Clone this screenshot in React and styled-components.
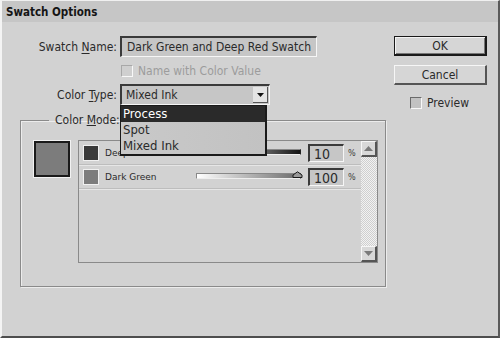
import React from "react";
import styled, { createGlobalStyle } from "styled-components";

const GlobalStyle = createGlobalStyle`
  html, body {
    margin: 0;
    padding: 0;
    background: #d2d2d2;
  }
  body {
    font-family: "DejaVu Sans Condensed", "Liberation Sans", sans-serif;
    font-size: 12px;
    color: #1e1e1e;
  }
`;

const rows = [
  { name: "Deep Red", color: "#3a3a3a", value: "10", track: "linear-gradient(90deg, #f4f4f4, #141414)", thumb: null },
  { name: "Dark Green", color: "#7c7c7c", value: "100", track: "linear-gradient(90deg, #ffffff, #6a6a6a)", thumb: 100 },
];

const App = () => {
  return (
    <>
      <GlobalStyle />
      <Window>
        <TitleBar>Swatch Options</TitleBar>
        <Body>
          <Main>
            <FormRow>
              <Label>
                Swatch <u>N</u>ame:
              </Label>
              <TextField>Dark Green and Deep Red Swatch</TextField>
            </FormRow>
            <FormRow $short>
              <span />
              <CheckLine $disabled>
                <CheckBox $disabled />
                Name with Color Value
              </CheckLine>
            </FormRow>
            <FormRow>
              <Label>
                Color <u>T</u>ype:
              </Label>
              <Select>
                <span>Mixed Ink</span>
                <ArrowButton>
                  <svg width="7" height="4" viewBox="0 0 7 4">
                    <path d="M0 0h7L3.5 4z" fill="#111" />
                  </svg>
                </ArrowButton>
                <Menu>
                  <MenuItem $active>Process</MenuItem>
                  <MenuItem>Spot</MenuItem>
                  <MenuItem>Mixed Ink</MenuItem>
                </Menu>
              </Select>
            </FormRow>
            <Group>
              <Legend>
                Color <u>M</u>ode:
              </Legend>
              <GroupInner>
                <BigSwatch />
                <InkList>
                  <InkRows>
                    {rows.map((r) => (
                      <InkRow key={r.name}>
                        <SmallSwatch $color={r.color} />
                        <InkName>{r.name}</InkName>
                        <Track $bg={r.track}>
                          {r.thumb !== null && (
                            <Thumb style={{ left: `${r.thumb}%` }}>
                              <svg width="11" height="7" viewBox="0 0 11 7">
                                <path d="M1 6.5V4L5.5 0.8L10 4v2.5z" fill="#9a9a9a" stroke="#1a1a1a" strokeWidth="1" />
                              </svg>
                            </Thumb>
                          )}
                        </Track>
                        <Percent>{r.value}</Percent>
                        <Unit>%</Unit>
                      </InkRow>
                    ))}
                  </InkRows>
                  <ScrollBar>
                    <ScrollButton>
                      <svg width="9" height="5" viewBox="0 0 9 5">
                        <path d="M0 5L4.5 0L9 5z" fill="#7a7a7a" />
                      </svg>
                    </ScrollButton>
                    <ScrollTrack />
                    <ScrollButton>
                      <svg width="9" height="5" viewBox="0 0 9 5">
                        <path d="M0 0h9L4.5 5z" fill="#7a7a7a" />
                      </svg>
                    </ScrollButton>
                  </ScrollBar>
                </InkList>
              </GroupInner>
            </Group>
          </Main>
          <Side>
            <Button $default>OK</Button>
            <Button>Cancel</Button>
            <CheckLine $side>
              <CheckBox />
              Preview
            </CheckLine>
          </Side>
        </Body>
      </Window>
    </>
  );
};

export default App;

const Window = styled.div`
  width: 500px;
  height: 338px;
  box-sizing: border-box;
  border-top: 1px solid #f0f0f0;
  border-left: 2px solid #f4f4f4;
  border-right: 2px solid #5a5a5a;
  border-bottom: 2px solid #4e4e4e;
  background: #d2d2d2;
  display: flex;
  flex-direction: column;
  overflow: hidden;
`;

const TitleBar = styled.div`
  height: 21px;
  background: #c6c6c6;
  font-family: "DejaVu Sans Condensed", "Liberation Sans", sans-serif;
  font-weight: bold;
  font-size: 11.5px;
  color: #151515;
  display: flex;
  align-items: center;
  padding-left: 4px;
`;

const Body = styled.div`
  flex: 1;
  display: flex;
  padding: 14px 0 0 16px;
`;

const Main = styled.div`
  width: 366px;
  display: flex;
  flex-direction: column;
`;

const FormRow = styled.div`
  display: grid;
  grid-template-columns: 99px auto;
  column-gap: 3px;
  align-items: center;
  margin-bottom: ${(p) => (p.$short ? "6px" : "7px")};
  justify-items: start;
`;

const Label = styled.label`
  justify-self: end;
  color: #2a2a2a;
  white-space: nowrap;
  u {
    text-underline-offset: 2px;
  }
`;

const sunken = `
  box-sizing: border-box;
  border-top: 2px solid #3a3a3a;
  border-left: 2px solid #3a3a3a;
  border-right: 1px solid #f6f6f6;
  border-bottom: 1px solid #f6f6f6;
  background: #c6c6c6;
`;

const TextField = styled.div`
  ${sunken}
  width: 197px;
  height: 21px;
  padding: 2px 0 0 5px;
  color: #2a2a2a;
  white-space: nowrap;
`;

const CheckLine = styled.label`
  display: flex;
  align-items: center;
  gap: 5px;
  color: ${(p) => (p.$disabled ? "#9c9c9c" : "#2a2a2a")};
  margin-left: ${(p) => (p.$side ? "16px" : "1px")};
  margin-top: ${(p) => (p.$side ? "2px" : "0")};
`;

const CheckBox = styled.span`
  width: 12px;
  height: 12px;
  box-sizing: border-box;
  border-top: 1px solid ${(p) => (p.$disabled ? "#a8a8a8" : "#6a6a6a")};
  border-left: 1px solid ${(p) => (p.$disabled ? "#a8a8a8" : "#6a6a6a")};
  border-right: 1px solid #f8f8f8;
  border-bottom: 1px solid #f8f8f8;
  background: ${(p) => (p.$disabled ? "#cfcfcf" : "#c2c2c2")};
`;

const Select = styled.div`
  ${sunken}
  position: relative;
  width: 150px;
  height: 21px;
  display: flex;
  align-items: center;
  justify-content: space-between;
  padding: 0 1px 0 4px;
  color: #2a2a2a;
`;

const ArrowButton = styled.span`
  width: 15px;
  height: 16px;
  box-sizing: border-box;
  background: #e4e4e4;
  border-right: 1px solid #555;
  border-bottom: 1px solid #555;
  display: flex;
  align-items: center;
  justify-content: center;
`;

const Menu = styled.div`
  position: absolute;
  left: -2px;
  top: 19px;
  width: 147px;
  box-sizing: border-box;
  border: 1px solid #1a1a1a;
  border-right-width: 2px;
  border-bottom-width: 2px;
  background: linear-gradient(90deg, #c9c9c9, #c2c2c2);
  z-index: 5;
`;

const MenuItem = styled.div`
  height: 16px;
  line-height: 16px;
  padding-left: 2px;
  font-size: 13px;
  background: ${(p) => (p.$active ? "#2a2a2a" : "transparent")};
  color: ${(p) => (p.$active ? "#ffffff" : "#2a2a2a")};
`;

const Group = styled.fieldset`
  margin: 1px 0 0 2px;
  padding: 0;
  width: 366px;
  height: 174px;
  box-sizing: border-box;
  border: 1px solid #8a8a8a;
  box-shadow: inset 1px 1px 0 #ececec, 1px 1px 0 #ececec;
`;

const Legend = styled.legend`
  margin-left: 28px;
  padding: 0 6px;
  color: #2a2a2a;
`;

const GroupInner = styled.div`
  display: flex;
  align-items: flex-start;
  padding: 13px 7px 0 13px;
`;

const BigSwatch = styled.div`
  width: 36px;
  height: 36px;
  box-sizing: border-box;
  background: #7c7c7c;
  border: 2px solid #1a1a1a;
  outline: 1px solid #f2f2f2;
  margin-top: 1px;
`;

const InkList = styled.div`
  margin-left: 8px;
  flex: 1;
  height: 123px;
  box-sizing: border-box;
  border: 1px solid #8a8a8a;
  display: flex;
`;

const InkRows = styled.div`
  flex: 1;
`;

const InkRow = styled.div`
  height: 23px;
  display: flex;
  align-items: center;
  border-bottom: 1px solid #bdbdbd;
  box-shadow: 0 1px 0 #e6e6e6;
  padding-left: 4px;
`;

const SmallSwatch = styled.span`
  width: 16px;
  height: 16px;
  box-sizing: border-box;
  border: 1px solid #f0f0f0;
  background: ${(p) => p.$color};
`;

const InkName = styled.span`
  width: 91px;
  margin-left: 6px;
  font-family: "DejaVu Sans", "Liberation Sans", sans-serif;
  font-size: 9px;
  color: #2a2a2a;
`;

const Track = styled.div`
  position: relative;
  width: 103px;
  height: 4px;
  margin-top: -2px;
  background: ${(p) => p.$bg};
  border: 1px solid #888;
  border-right-color: #222;
  border-bottom-color: #eee;
`;

const Thumb = styled.span`
  position: absolute;
  top: -3px;
  transform: translateX(-8px);
  display: flex;
`;

const Percent = styled.div`
  ${sunken}
  margin-left: 7px;
  width: 36px;
  height: 18px;
  padding: 0 0 0 4px;
  font-family: "DejaVu Sans Condensed", "Liberation Sans", sans-serif;
  font-size: 14px;
  color: #2a2a2a;
  line-height: 16px;
`;

const Unit = styled.span`
  margin-left: 4px;
  font-size: 9px;
  color: #3a3a3a;
`;

const ScrollBar = styled.div`
  width: 16px;
  display: flex;
  flex-direction: column;
`;

const ScrollButton = styled.div`
  height: 16px;
  box-sizing: border-box;
  background: #d8d8d8;
  border-top: 1px solid #f6f6f6;
  border-left: 1px solid #f6f6f6;
  border-right: 2px solid #555;
  border-bottom: 2px solid #555;
  display: flex;
  align-items: center;
  justify-content: center;
`;

const ScrollTrack = styled.div`
  flex: 1;
  background: repeating-conic-gradient(#f2f2f2 0% 25%, #cfcfcf 0% 50%) 0 0 / 2px 2px;
`;

const Side = styled.div`
  margin-left: 10px;
  display: flex;
  flex-direction: column;
  gap: 9px;
  width: 93px;
`;

const Button = styled.button`
  width: 93px;
  height: 20px;
  box-sizing: border-box;
  background: #d6d6d6;
  font-family: "DejaVu Sans Condensed", "Liberation Sans", sans-serif;
  font-size: 12px;
  color: #2a2a2a;
  padding: 0;
  border-top: 1px solid ${(p) => (p.$default ? "#1a1a1a" : "#f6f6f6")};
  border-left: 1px solid ${(p) => (p.$default ? "#1a1a1a" : "#f6f6f6")};
  border-right: 2px solid ${(p) => (p.$default ? "#1a1a1a" : "#555")};
  border-bottom: 2px solid ${(p) => (p.$default ? "#1a1a1a" : "#555")};
  box-shadow: ${(p) => (p.$default ? "inset 1px 1px 0 #f4f4f4, inset -1px -1px 0 #777" : "none")};
`;
